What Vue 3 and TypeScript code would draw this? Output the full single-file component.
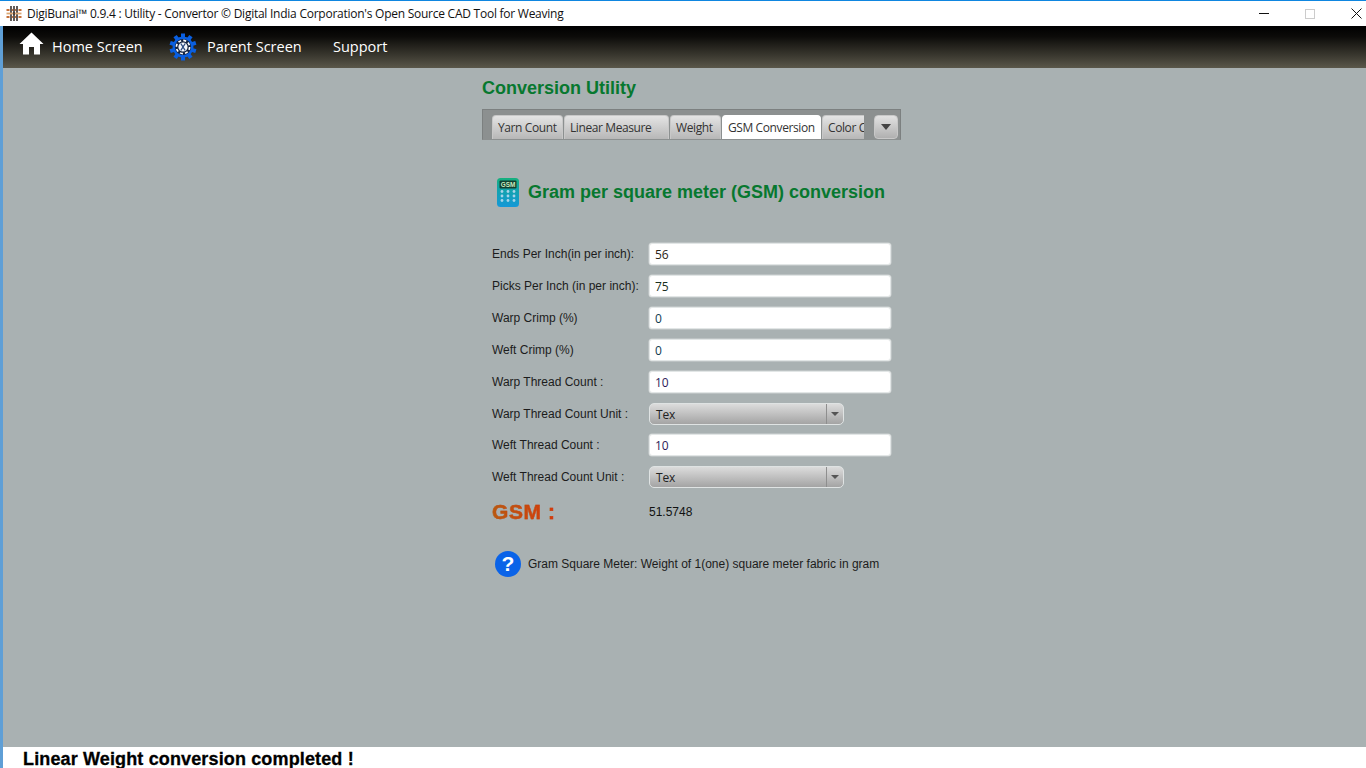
<script setup lang="ts">
interface Row { label: string; value: string; kind: 'input' | 'select'; color: string; gap: number }
const rows: Row[] = [
  { label: 'Ends Per Inch(in per inch):', value: '56', kind: 'input', color: '#2a2418', gap: 10 },
  { label: 'Picks Per Inch (in per inch):', value: '75', kind: 'input', color: '#1a2e20', gap: 10 },
  { label: 'Warp Crimp (%)', value: '0', kind: 'input', color: '#103a50', gap: 10 },
  { label: 'Weft Crimp (%)', value: '0', kind: 'input', color: '#103a50', gap: 10 },
  { label: 'Warp Thread Count :', value: '10', kind: 'input', color: '#2c1a5a', gap: 10 },
  { label: 'Warp Thread Count Unit :', value: 'Tex', kind: 'select', color: '#222', gap: 9 },
  { label: 'Weft Thread Count :', value: '10', kind: 'input', color: '#2c1a5a', gap: 10 },
  { label: 'Weft Thread Count Unit :', value: 'Tex', kind: 'select', color: '#222', gap: 10 },
]
const tabs = [
  { name: 'Yarn Count', w: 71 },
  { name: 'Linear Measure', w: 105 },
  { name: 'Weight', w: 51 },
  { name: 'GSM Conversion', w: 99, active: true },
  { name: 'Color Conversion', w: 46 },
]
</script>

<template>
  <div class="window">
    <header class="titlebar">
      <svg class="app-icon" width="16" height="17" viewBox="0 0 16 17">
        <path d="M5 1V16M8 1V16M11 1V16" stroke="#3a3230" stroke-width="1.6" />
        <path d="M0.5 5H3.5M6 5H7M9 5H10M12.5 5H15.5M0.5 12H3.5M6 12H7M9 12H10M12.5 12H15.5" stroke="#c4703a" stroke-width="1.8" />
        <path d="M0.5 8.5H15.5" stroke="#dba876" stroke-width="1.8" />
        <path d="M8 7V10" stroke="#3a3230" stroke-width="1.6" />
      </svg>
      <span class="title">DigiBunai™ 0.9.4 : Utility - Convertor © Digital India Corporation's Open Source CAD Tool for Weaving</span>
      <div class="controls">
        <span class="ctl"><i class="min"></i></span>
        <span class="ctl"><i class="max"></i></span>
        <span class="ctl">
          <svg width="11" height="11" viewBox="0 0 11 11"><path d="M.5.5L10.5 10.5M10.5.5L.5 10.5" stroke="#111" stroke-width="1" fill="none" /></svg>
        </span>
      </div>
    </header>

    <div class="shell">
      <nav class="menubar">
        <div class="menu menu-home">
          <svg width="25" height="23" viewBox="0 0 25 23">
            <path d="M12.5 0.5L0.5 12H4V22.5H10V15H15V22.5H21V12H24.5Z" fill="#fff" />
          </svg>
          <span>Home Screen</span>
        </div>
        <div class="menu menu-parent">
          <svg width="28" height="28" viewBox="0 0 28 28">
            <g fill="#0a5fe0">
              <circle cx="14" cy="14" r="10.5" />
              <rect v-for="a in [0,36,72,108,144,180,216,252,288,324]" :key="a" x="12" y="0.5" width="4" height="6" :transform="`rotate(${a} 14 14)`" />
            </g>
            <circle cx="14" cy="14" r="8" fill="#14233f" />
            <circle cx="14" cy="14" r="6.6" fill="none" stroke="#fff" stroke-width="1.6" stroke-dasharray="3 2.2" />
            <circle cx="14" cy="14" r="4.6" fill="#f4f6fa" />
            <path d="M11.8 10.5L16.2 17.5M16.2 10.5L11.8 17.5" stroke="#2a4a80" stroke-width="1.4" />
          </svg>
          <span>Parent Screen</span>
        </div>
        <div class="menu menu-support"><span>Support</span></div>
      </nav>

      <main class="content">
        <section class="panel">
          <h1 class="heading">Conversion Utility</h1>
          <div class="tabbar">
            <div class="tabs">
              <div v-for="t in tabs" :key="t.name" class="tab" :class="{ active: t.active }" :style="{ width: t.w + 'px' }"><span>{{ t.name }}</span></div>
            </div>
            <div class="more"><i class="arrow"></i></div>
          </div>

          <div class="subhead">
            <svg width="22" height="29" viewBox="0 0 22 29">
              <defs>
                <linearGradient id="calcBody" x1="0" y1="0" x2="0" y2="1">
                  <stop offset="0" stop-color="#17b07c" />
                  <stop offset="0.35" stop-color="#12a4a8" />
                  <stop offset="1" stop-color="#1598d8" />
                </linearGradient>
              </defs>
              <rect x="0" y="0" width="22" height="29" rx="3.5" fill="url(#calcBody)" />
              <rect x="2.5" y="2.5" width="17" height="8" rx="1" fill="#123f30" />
              <text x="11" y="9" text-anchor="middle" class="calc-text">GSM</text>
              <g fill="#a8d4ea">
                <template v-for="y in [13.5,18,22.5]" :key="y">
                  <circle v-for="x in [5,11,17]" :key="x" :cx="x" :cy="y" r="1.4" />
                </template>
              </g>
            </svg>
            <h2>Gram per square meter (GSM) conversion</h2>
          </div>

          <div class="form">
            <div v-for="r in rows" :key="r.label" class="row" :style="{ marginBottom: r.gap + 'px' }">
              <label>{{ r.label }}</label>
              <div v-if="r.kind === 'input'" class="input" :style="{ color: r.color }">{{ r.value }}</div>
              <div v-else class="select">
                <span class="sel-val">{{ r.value }}</span>
                <span class="sel-btn"><i class="arrow small"></i></span>
              </div>
            </div>
          </div>

          <div class="result">
            <span class="gsm">GSM :</span>
            <span class="gsm-val">51.5748</span>
          </div>

          <div class="note">
            <span class="q">?</span>
            <span>Gram Square Meter: Weight of 1(one) square meter fabric in gram</span>
          </div>
        </section>
      </main>

      <footer class="status">Linear Weight conversion completed !</footer>
    </div>
  </div>
</template>

<style>
html, body { margin: 0; padding: 0; overflow: hidden; }
</style>

<style scoped>
.window {
  width: 1366px;
  height: 768px;
  display: flex;
  flex-direction: column;
  background: #fff;
  overflow: hidden;
  font-family: "Liberation Sans", Arial, sans-serif;
}
.titlebar {
  height: 25px;
  border-top: 1px solid #0f86e0;
  display: flex;
  align-items: center;
  padding-left: 6px;
  background: #fff;
  flex: none;
}
.app-icon { flex: none; }
.title {
  margin-left: 5px;
  font: 12px "Open Sans", sans-serif;
  color: #111;
  letter-spacing: -0.25px;
  white-space: nowrap;
}
.controls { margin-left: auto; margin-right: -13px; display: flex; align-items: center; }
.ctl { width: 46px; height: 25px; display: flex; align-items: center; justify-content: center; }
.min { display: block; width: 10px; height: 1px; background: #111; }
.max { display: block; width: 8px; height: 8px; border: 1px solid #ccc; }
.shell {
  flex: 1;
  min-height: 0;
  display: flex;
  flex-direction: column;
  border-left: 3px solid #5f9fd6;
}
.menubar {
  height: 42px;
  flex: none;
  display: flex;
  align-items: stretch;
  background: linear-gradient(#000 0%, #0c0b09 25%, #3a382f 70%, #5a574a 100%);
  color: #fff;
  font: 14.5px "Open Sans", sans-serif;
}
.menu { display: flex; align-items: center; }
.menu span { position: relative; top: -1px; white-space: nowrap; }
.menu-home { padding-left: 16px; width: 150px; box-sizing: border-box; gap: 8px; }
.menu-home svg { margin-top: -8px; }
.menu-parent { width: 164px; box-sizing: border-box; padding-left: 16px; gap: 10px; }
.menu-parent svg { margin-top: -1px; }
.menu-support { padding-left: 16px; }
.content {
  flex: 1;
  min-height: 0;
  background: #a9b1b2;
  display: flex;
  justify-content: flex-start;
}
.panel { margin-left: 479px; width: 419px; display: flex; flex-direction: column; }
.heading {
  margin: 9px 0 0;
  font-size: 18px;
  line-height: 22px;
  font-weight: 700;
  color: #07782f;
}
.tabbar {
  margin-top: 10px;
  height: 31px;
  box-sizing: border-box;
  background: #8c9090;
  border: 1px solid #7c8080;
  border-bottom-color: #8c9090;
  display: flex;
  position: relative;
}
.tabs {
  display: flex;
  gap: 1px;
  margin: 5px 0 0 9px;
  width: 372px;
  overflow: hidden;
}
.tab {
  flex: none;
  height: 25px;
  box-sizing: border-box;
  padding: 3px 0 0 5px;
  font: 12px "Open Sans", sans-serif;
  letter-spacing: -0.4px;
  color: #333;
  background: linear-gradient(#e4e4e4, #b5b5b5);
  border: 1px solid #c8c8c8;
  border-bottom: 0;
  border-radius: 4px 4px 0 0;
  white-space: nowrap;
  overflow: hidden;
}
.tab.active { background: #fff; border-color: #fff; color: #333; }
.more {
  position: absolute;
  right: 2px;
  top: 5px;
  width: 24px;
  height: 24px;
  box-sizing: border-box;
  border: 1px solid #c8c8c8;
  border-radius: 4px;
  background: linear-gradient(#e2e2e2, #b0b0b0);
  display: flex;
  align-items: center;
  justify-content: center;
}
.arrow {
  display: block;
  width: 0;
  height: 0;
  border-left: 5px solid transparent;
  border-right: 5px solid transparent;
  border-top: 6px solid #444;
}
.arrow.small { border-left-width: 4px; border-right-width: 4px; border-top-width: 4px; border-top-color: #555; }
.subhead {
  display: flex;
  align-items: center;
  margin: 37px 0 0 15px;
  height: 30px;
  gap: 9px;
}
.calc-text { font: bold 6.4px "Liberation Sans", sans-serif; fill: #c8ecc0; }
.subhead h2 {
  margin: 0;
  font-size: 18px;
  font-weight: 700;
  color: #07782f;
  white-space: nowrap;
}
.form { margin-top: 36px; padding-left: 10px; display: flex; flex-direction: column; }
.row { display: flex; align-items: center; height: 22px; }
.row label {
  width: 157px;
  flex: none;
  font-size: 12px;
  color: #1c1c1c;
  white-space: nowrap;
}
.input {
  width: 242px;
  height: 22px;
  box-sizing: border-box;
  background: #fff;
  border: 1px solid #e2e6e6;
  border-radius: 3px;
  padding: 3px 0 0 5px;
  font: 12px "Open Sans", sans-serif;
  letter-spacing: -0.2px;
  line-height: 15px;
  box-shadow: 0 0 0 0.5px #d0d4d4;
}
.select {
  width: 195px;
  height: 22px;
  box-sizing: border-box;
  border: 1px solid #dfe3e3;
  border-radius: 5px;
  background: linear-gradient(#dcdcdc, #a4a4a4);
  display: flex;
  align-items: stretch;
  overflow: hidden;
}
.sel-val { flex: 1; padding: 3px 0 0 6px; font: 12px "Open Sans", sans-serif; letter-spacing: -0.2px; color: #222; line-height: 15px; }
.sel-btn { width: 16px; border-left: 1px solid #8e8e8e; display: flex; align-items: center; justify-content: center; }
.result { display: flex; align-items: center; margin: 1px 0 0 10px; height: 26px; }
.gsm {
  width: 157px;
  flex: none;
  font-size: 21px;
  font-weight: 700;
  letter-spacing: 0.6px;
  background: linear-gradient(90deg, #b85a10 0%, #e03008 50%, #c03c08 70%, #8a7a10 85%);
  -webkit-background-clip: text;
  background-clip: text;
  color: transparent;
  -webkit-text-stroke: 0.4px rgba(190, 70, 15, 0.7);
}
.gsm-val { font-size: 12px; color: #111; }
.note {
  margin: 26px 0 0 13px;
  display: flex;
  align-items: center;
  gap: 7px;
  font-size: 12px;
  color: #1c1c1c;
  white-space: nowrap;
}
.q {
  width: 26px;
  height: 26px;
  border-radius: 50%;
  background: #0a63e8;
  color: #fff;
  font-size: 21px;
  font-weight: 700;
  display: flex;
  align-items: center;
  justify-content: center;
}
.status {
  height: 21px;
  flex: none;
  background: #fff;
  padding-left: 20px;
  font-size: 18px;
  line-height: 25px;
  font-weight: 700;
  letter-spacing: 0.14px;
  color: #000;
  white-space: nowrap;
  -webkit-text-stroke: 0.3px #000;
}
</style>
